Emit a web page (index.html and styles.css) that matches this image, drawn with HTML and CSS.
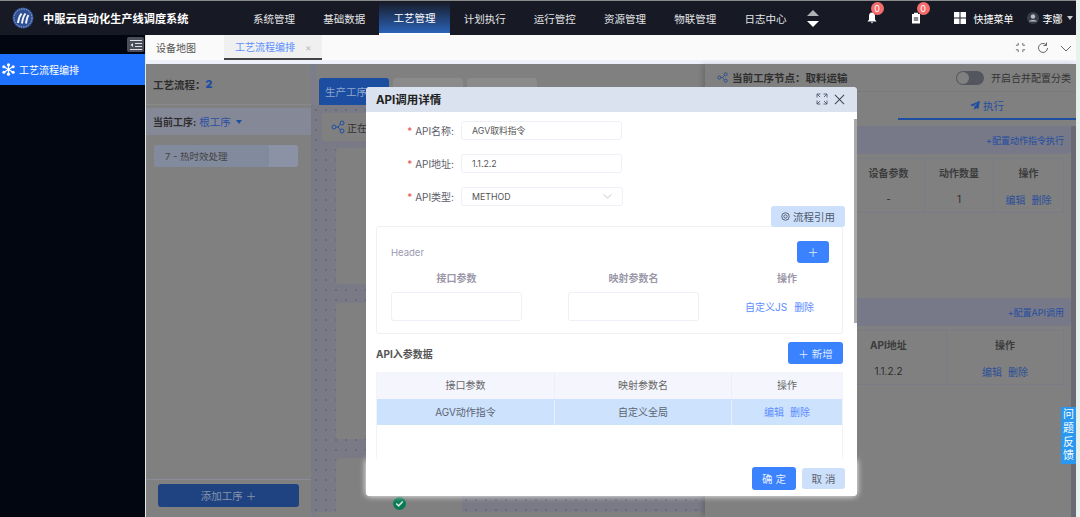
FILE: index.html
```html
<!DOCTYPE html>
<html>
<head>
    <meta charset="UTF-8">
    <title>中服云自动化生产线调度系统</title>
    <link rel="stylesheet" href="styles.css">
</head>
<body>
    <div class="app">
        <header class="topbar">
            <div class="brand">
                <svg class="brand-logo" viewBox="0 0 22 22">
                    <circle cx="11" cy="11" r="10.5" fill="#2f4f94"/>
                    <circle cx="11" cy="11" r="9" fill="none" stroke="#9fb0d4" stroke-width="1" stroke-dasharray="1.5 1"/>
                    <path d="M6 16C6.500 12 7.500 9 9.500 6.500M10 16.500C10.500 12 11.500 9 13.500 6.500M14 16.500C14.500 13 15 10 16.500 8" fill="none" stroke="#f2f5fb" stroke-width="2"/>
                </svg>
                <span class="brand-name">中服云自动化生产线调度系统</span>
            </div>
            <nav class="nav">
                <a class="nav-item">系统管理</a>
                <a class="nav-item">基础数据</a>
                <a class="nav-item active">工艺管理</a>
                <a class="nav-item">计划执行</a>
                <a class="nav-item">运行管控</a>
                <a class="nav-item">资源管理</a>
                <a class="nav-item">物联管理</a>
                <a class="nav-item">日志中心</a>
            </nav>
            <div class="nav-scroll">
                <i class="tri-up"></i>
                <i class="tri-down"></i>
            </div>
            <div class="top-tools">
                <span class="tool tool-bell">
                    <svg viewBox="0 0 12 12" width="12" height="12"><path d="M6 .5C3.800.5 3 2.200 3 4v3.500L1.500 9.500h9L9 7.500V4C9 2.200 8.200.5 6 .5zM4.800 10.200h2.400L6 11.500z" fill="#fff"/></svg>
                    <b class="badge">0</b>
                </span>
                <span class="tool tool-doc">
                    <svg viewBox="0 0 12 12" width="12" height="12"><path d="M2 2h8v9.500H2zM4 .8h4v2H4z" fill="#fff"/><path d="M3.800 6h4.400M3.800 8h4.400" stroke="#171a24"/></svg>
                    <b class="badge">0</b>
                </span>
                <span class="quick">
                    <svg viewBox="0 0 12 12" width="12" height="12"><path d="M0 0h5.500v5.500H0zM6.500 0H12v5.500H6.500zM0 6.500h5.500V12H0zM6.500 6.500H12V12H6.500z" fill="#fff"/></svg>
                    快捷菜单
                </span>
                <span class="user">
                    <svg viewBox="0 0 12 12" width="12" height="12"><circle cx="6" cy="6" r="6" fill="#3a3e4a"/><circle cx="6" cy="4.500" r="2.200" fill="#b9bcc4"/><path d="M2 9.500C2.500 7.500 9.500 7.500 10 9.500z" fill="#b9bcc4"/></svg>
                    李娜
                    <i class="caret"></i>
                </span>
            </div>
        </header>

        <div class="main">
            <aside class="sidebar">
                <div class="side-top"><span class="collapse-btn">
                    <svg viewBox="0 0 12 10" width="12" height="10"><path d="M0 .5h12M5 3.500h7M5 6.500h7M0 9.500h12" stroke="#dfe1e6"/><path d="M3 3v4L.5 5z" fill="#dfe1e6"/></svg>
                </span></div>
                <div class="side-item">
                    <svg viewBox="0 0 14 14" width="13" height="13"><path d="M7 1v12M2 4l10 6M12 4L2 10" stroke="#fff" stroke-width="1.400"/><circle cx="7" cy="2" r="1.700" fill="#fff"/><circle cx="7" cy="12" r="1.700" fill="#fff"/><circle cx="2" cy="4" r="1.700" fill="#fff"/><circle cx="12" cy="4" r="1.700" fill="#fff"/><circle cx="2" cy="10" r="1.700" fill="#fff"/><circle cx="12" cy="10" r="1.700" fill="#fff"/></svg>
                    工艺流程编排
                </div>
            </aside>

            <div class="workspace">
                <div class="tabbar">
                    <span class="page-tab">设备地图</span>
                    <span class="page-tab current">工艺流程编排<i class="tab-close">×</i></span>
                    <div class="tabbar-tools">
                        <svg viewBox="0 0 12 12" width="11" height="11"><path d="M1 3.500l2.500 0 0-2.500M8.500 1l0 2.500 2.500 0M11 8.500l-2.500 0 0 2.500M3.500 11l0-2.500-2.500 0" fill="none" stroke="#666"/></svg>
                        <svg viewBox="0 0 12 12" width="12" height="12"><path d="M10.500 6A4.500 4.500 0 1 1 9 2.600" fill="none" stroke="#666"/><path d="M9.500.5v3h-3" fill="none" stroke="#666"/></svg>
                        <svg viewBox="0 0 12 12" width="12" height="12"><path d="M1 4l5 5 5-5" fill="none" stroke="#666"/></svg>
                    </div>
                </div>

                <div class="content">
                    <section class="flow-panel">
                        <div class="flow-title">工艺流程： <b>2</b></div>
                        <div class="flow-current">当前工序: <span>根工序</span><i class="flow-caret"></i></div>
                        <div class="flow-list">
                            <div class="flow-item"><div class="flow-item-fill">7 - 热时效处理</div></div>
                        </div>
                        <div class="flow-foot"><button class="add-btn">添加工序 ＋</button></div>
                    </section>

                    <section class="canvas">
                        <div class="canvas-tabs">
                            <span class="canvas-tab on">生产工序</span>
                            <span class="canvas-tab"></span>
                            <span class="canvas-tab"></span>
                        </div>
                        <div class="canvas-board">
                            <div class="canvas-tool">
                                <svg viewBox="0 0 14 14" width="14" height="14"><g fill="none" stroke="#1f4ea1"><circle cx="3" cy="7" r="2"/><circle cx="11" cy="3" r="2"/><circle cx="11" cy="11" r="2"/><path d="M5 7h2M7 7l2.500-3M7 7l2.500 3"/></g></svg>
                                正在编辑
                            </div>
                            <div class="node"></div>
                            <div class="node"></div>
                            <div class="node last">
                                <svg class="node-check" viewBox="0 0 12 12" width="13" height="13"><circle cx="6" cy="6" r="6" fill="#0a7a55"/><path d="M3 6l2.200 2.200L9 4.200" fill="none" stroke="#d6e8e0" stroke-width="1.500"/></svg>
                            </div>
                        </div>
                    </section>

                    <section class="detail">
                        <div class="detail-head">
                            <svg viewBox="0 0 12 12" width="11" height="11"><g fill="none" stroke="#2a508f"><circle cx="2.500" cy="6" r="1.700"/><circle cx="9.500" cy="2.500" r="1.700"/><circle cx="9.500" cy="9.500" r="1.700"/><path d="M4 6h2l2-2.500M6 6l2 2.500"/></g></svg>
                            <b>当前工序节点：取料运输</b>
                            <span class="switch"><i></i></span>
                            <span class="switch-text">开启合并配置分类</span>
                        </div>
                        <div class="detail-tabs">
                            <span class="detail-tab">
                                <svg viewBox="0 0 12 12" width="10" height="10"><path d="M12 1L0 6l3.500 1.500L9 3.500 5 8.500V12l2.500-2.500L10 11z" fill="#1f4ea1"/></svg>
                                执行
                            </span>
                        </div>
                        <div class="detail-body">
                            <div class="band"><a>+配置动作指令执行</a></div>
                            <div class="grid-table table-action">
                                <div class="cell head"></div>
                                <div class="cell head">设备参数</div>
                                <div class="cell head">动作数量</div>
                                <div class="cell head">操作</div>
                                <div class="cell"></div>
                                <div class="cell">-</div>
                                <div class="cell">1</div>
                                <div class="cell links"><a>编辑</a><a>删除</a></div>
                            </div>
                            <div class="band band-api"><a>+配置API调用</a></div>
                            <div class="grid-table table-api">
                                <div class="cell head"></div>
                                <div class="cell head">API地址</div>
                                <div class="cell head">操作</div>
                                <div class="cell"></div>
                                <div class="cell">1.1.2.2</div>
                                <div class="cell links"><a>编辑</a><a>删除</a></div>
                            </div>
                        </div>
                    </section>

                    <div class="feedback">问<br>题<br>反<br>馈</div>

                    <div class="dialog">
                        <div class="dialog-head">
                            <span class="dialog-title">API调用详情</span>
                            <svg viewBox="0 0 12 12" width="12" height="12"><path d="M1 4.500V1h3.500M1 1l3 3M11 4.500V1H7.500M11 1L8 4M1 7.500V11h3.500M1 11l3-3M11 7.500V11H7.500M11 11L8 8" fill="none" stroke="#4b5a70" stroke-width=".9"/></svg>
                            <svg viewBox="0 0 12 12" width="11" height="11"><path d="M1 1l10 10M11 1L1 11" stroke="#3c4656" stroke-width="1.100"/></svg>
                        </div>
                        <div class="dialog-body">
                            <div class="form-row">
                                <label class="form-label"><em>*</em> API名称:</label>
                                <div class="form-input">AGV取料指令</div>
                            </div>
                            <div class="form-row">
                                <label class="form-label"><em>*</em> API地址:</label>
                                <div class="form-input">1.1.2.2</div>
                            </div>
                            <div class="form-row">
                                <label class="form-label"><em>*</em> API类型:</label>
                                <div class="form-input select">METHOD
                                    <svg viewBox="0 0 10 6" width="9" height="5"><path d="M.5.5L5 5 9.500.5" fill="none" stroke="#b5b9c2"/></svg>
                                </div>
                            </div>
                            <div class="ref-row">
                                <button class="ref-btn">
                                    <svg viewBox="0 0 12 12" width="9" height="9"><circle cx="6" cy="6" r="5" fill="none" stroke="#556" stroke-width="1.200"/><circle cx="6" cy="6" r="2.200" fill="none" stroke="#556" stroke-width="1.200"/></svg>
                                    流程引用
                                </button>
                            </div>
                            <div class="header-box">
                                <div class="header-top">
                                    <span class="header-label">Header</span>
                                    <button class="plus-btn">＋</button>
                                </div>
                                <div class="header-cols">
                                    <span>接口参数</span>
                                    <span>映射参数名</span>
                                    <span>操作</span>
                                </div>
                                <div class="header-cols header-vals">
                                    <div class="blank-input"></div>
                                    <div class="blank-input"></div>
                                    <div class="header-links"><a>自定义JS</a><a>删除</a></div>
                                </div>
                            </div>
                            <div class="params-top">
                                <b>API入参数据</b>
                                <button class="add-param">＋ 新增</button>
                            </div>
                            <div class="params">
                                <div class="params-row params-head">
                                    <div>接口参数</div>
                                    <div>映射参数名</div>
                                    <div>操作</div>
                                </div>
                                <div class="params-row params-sel">
                                    <div>AGV动作指令</div>
                                    <div>自定义全局</div>
                                    <div class="param-links"><a>编辑</a><a>删除</a></div>
                                </div>
                            </div>
                            <i class="dialog-scroll"></i>
                        </div>
                        <div class="dialog-foot">
                            <button class="btn-ok">确 定</button>
                            <button class="btn-cancel">取 消</button>
                        </div>
                    </div>
                </div>
            </div>
        </div>
    </div>
</body>
</html>
```

FILE: styles.css
```css
* {
    box-sizing: border-box;
}
body {
    margin: 0;
    font-family: Inter, 'Noto Sans CJK SC', sans-serif;
    font-size: 10px;
    color: #333;
    white-space: nowrap;
    overflow: hidden;
}
i {
    font-style: normal;
}
button {
    font-family: inherit;
    border: none;
    padding: 0;
}
.app {
    height: 100vh;
    display: flex;
    flex-direction: column;
    padding-right: 4px;
    background-color: #e8f3ee;
}

/* top bar */
.topbar {
    height: 35px;
    flex: none;
    display: flex;
    align-items: stretch;
    background-color: #171a24;
    border-top: 1px solid #8a8a8a;
    color: #fff;
}
.brand {
    width: 239px;
    display: flex;
    align-items: center;
    padding-left: 12px;
    gap: 9px;
}
.brand-logo {
    width: 22px;
    height: 22px;
}
.brand-name {
    font-size: 11.2px;
    font-weight: bold;
}
.nav {
    display: flex;
}
.nav-item {
    width: 70.2px;
    display: flex;
    align-items: center;
    justify-content: center;
    color: #e4e5e8;
    font-size: 10.5px;
}
.nav-item.active {
    color: #fff;
    background: linear-gradient(#171a24, #2b62b8);
    border-bottom: 2px solid #fff;
}
.nav-scroll {
    display: flex;
    flex-direction: column;
    justify-content: center;
    gap: 5px;
    margin-left: 6px;
}
.tri-up,
.tri-down {
    width: 0;
    height: 0;
    border-left: 6px solid transparent;
    border-right: 6px solid transparent;
}
.tri-up {
    border-bottom: 6px solid #b0b2b8;
}
.tri-down {
    border-top: 6px solid #fff;
}
.top-tools {
    flex: 1;
    display: flex;
    align-items: center;
    padding-left: 47px;
}
.tool {
    position: relative;
    display: flex;
}
.tool-doc {
    margin-left: 32px;
}
.badge {
    position: absolute;
    top: -10px;
    left: 5px;
    width: 13px;
    height: 13px;
    border-radius: 50%;
    background-color: #f56c6c;
    font-size: 9px;
    font-weight: normal;
    line-height: 13px;
    text-align: center;
}
.tool-doc .badge {
    left: 7px;
}
.quick {
    display: flex;
    align-items: center;
    gap: 8px;
    margin-left: 32px;
}
.user {
    display: flex;
    align-items: center;
    gap: 4px;
    margin-left: 13px;
}
.caret {
    width: 0;
    height: 0;
    border-left: 3.5px solid transparent;
    border-right: 3.5px solid transparent;
    border-top: 4px solid #ccc;
}

/* side */
.main {
    flex: 1;
    min-height: 0;
    display: flex;
}
.sidebar {
    width: 146px;
    flex: none;
    background-color: #020611;
    border-right: 1px solid #e6e6e6;
}
.side-top {
    height: 19px;
    display: flex;
    align-items: center;
    justify-content: flex-end;
    padding-right: 1px;
}
.collapse-btn {
    width: 17px;
    height: 15px;
    display: flex;
    align-items: center;
    justify-content: center;
    background-color: #4a4d5a;
    border-radius: 2px;
}
.side-item {
    height: 31px;
    display: flex;
    align-items: center;
    gap: 4px;
    padding-left: 2px;
    background-color: #1f72ff;
    color: #fff;
}

/* tabs */
.workspace {
    flex: 1;
    min-width: 0;
    display: flex;
    flex-direction: column;
}
.tabbar {
    height: 29px;
    flex: none;
    display: flex;
    background-color: #fafafa;
    border-bottom: 4px solid #eef0fa;
    color: #555;
}
.page-tab {
    height: 100%;
    display: flex;
    align-items: center;
    padding: 0 10px;
    margin-right: 18px;
}
.page-tab.current {
    width: 98px;
    margin: 0;
    padding: 0 11px;
    background-color: #f0f0f0;
    border-bottom: 2px solid #444;
    color: #5e8fff;
}
.tab-close {
    margin-left: 10px;
    color: #bbb;
}
.tabbar-tools {
    margin-left: auto;
    display: flex;
    align-items: center;
    gap: 11px;
    padding-right: 4px;
}

/* content, dimmed behind the dialog */
.content {
    flex: 1;
    min-height: 0;
    position: relative;
    display: flex;
    background-color: #808080;
}
.flow-panel {
    width: 165px;
    flex: none;
    display: flex;
    flex-direction: column;
    color: #2e2e2e;
}
.flow-title {
    height: 41px;
    display: flex;
    align-items: center;
    padding-left: 7px;
    font-size: 10.5px;
    font-weight: bold;
    border-bottom: 1px solid #8a8a8a;
}
.flow-title b {
    color: #1f4ea1;
}
.flow-current {
    height: 27px;
    margin-top: 3px;
    display: flex;
    align-items: center;
    padding-left: 7px;
    background-color: #858997;
    font-weight: bold;
}
.flow-current span {
    margin-left: 3px;
    color: #2a50a5;
    font-size: 10.5px;
    font-weight: normal;
}
.flow-caret {
    margin-left: 5px;
    border-left: 3.5px solid transparent;
    border-right: 3.5px solid transparent;
    border-top: 4px solid #1f4ea1;
}
.flow-list {
    flex: 1;
    padding: 10px 13px 0 8px;
}
.flow-item {
    height: 22px;
    background-color: #8b92a5;
    border-radius: 3px;
}
.flow-item-fill {
    width: 115px;
    height: 100%;
    display: flex;
    align-items: center;
    padding-left: 11px;
    background-color: #828a9d;
    border-radius: 3px;
    color: #444;
    font-size: 9.5px;
}
.flow-foot {
    height: 38px;
    padding: 4px 12px 0 12px;
    border-top: 1px solid #8b8c9b;
}
.add-btn {
    width: 141px;
    height: 23px;
    display: block;
    background-color: #1f4280;
    border-radius: 3px;
    color: #8794ab;
    font-size: 10.5px;
}
.canvas {
    width: 394px;
    flex: none;
    display: flex;
    flex-direction: column;
    border-left: 5px solid #7b7d8b;
}
.canvas-tabs {
    height: 41px;
    flex: none;
    display: flex;
    align-items: flex-end;
    gap: 4px;
    padding-left: 3px;
}
.canvas-tab {
    width: 70px;
    height: 27px;
    display: flex;
    align-items: center;
    padding-left: 6px;
    background-color: #8b8b8b;
    border-radius: 3px 3px 0 0;
}
.canvas-tab.on {
    background-color: #1b4da0;
    color: #8fa6cf;
    font-size: 10.5px;
}
.canvas-board {
    height: 407px;
    margin-left: -5px;
    padding: 8px 0 0 11px;
    background-color: #797a85;
    background-image: radial-gradient(#62636f 0.6px, transparent 0.9px);
    background-size: 10px 10px;
}
.canvas-tool {
    width: 200px;
    height: 28px;
    display: flex;
    align-items: center;
    gap: 2px;
    padding-left: 9px;
    background-color: #808080;
    border-radius: 2px;
    color: #333;
}
.node {
    width: 300px;
    height: 136px;
    margin: 7px 0 19px 14px;
    background-color: #808080;
    border-radius: 3px;
}
.node + .node {
    margin-top: 0;
}
.node.last {
    width: 126px;
    height: 55px;
    margin-bottom: 0;
    display: flex;
    align-items: flex-end;
    justify-content: center;
    padding: 0 0 3px 0;
}
.node-check {
    display: block;
}

/* right panel */
.detail {
    flex: 1;
    min-width: 0;
    display: flex;
    flex-direction: column;
    box-shadow: -3px 0 5px rgba(0, 0, 0, 0.15);
    color: #2e2e2e;
}
.detail-head {
    height: 28px;
    flex: none;
    display: flex;
    align-items: center;
    padding: 0 5px 0 12px;
    border-bottom: 1px solid #7a7a7a;
}
.detail-head b {
    margin-left: 4px;
    font-size: 10.5px;
}
.switch {
    width: 28px;
    height: 14px;
    margin-left: auto;
    padding: 1px;
    background-color: #53565f;
    border-radius: 7px;
}
.switch i {
    display: block;
    width: 12px;
    height: 12px;
    background-color: #808080;
    border-radius: 50%;
}
.switch-text {
    margin-left: 7px;
    color: #333;
}
.detail-tabs {
    height: 28px;
    flex: none;
    display: flex;
    justify-content: flex-end;
}
.detail-tab {
    width: 178px;
    display: flex;
    align-items: center;
    justify-content: center;
    gap: 3px;
    border-bottom: 2px solid #1f4ea1;
    color: #1f4ea1;
    font-size: 10.5px;
}
.detail-body {
    flex: 1;
    min-height: 0;
    margin-top: 6px;
    border-right: 5px solid #6a6a74;
}
.band {
    height: 28px;
    display: flex;
    align-items: flex-end;
    justify-content: flex-end;
    padding: 0 7px 7px 0;
    background-color: #787988;
    border-radius: 0 3px 3px 0;
    color: #1f4ea1;
    font-size: 9px;
}
.band-api {
    margin-top: 85px;
}
.grid-table {
    display: grid;
    margin: 4px 7px 0 0;
    border: 1px solid #797b86;
    border-left: none;
}
.table-action {
    grid-template-columns: 1fr 72px 69px 70px;
}
.table-api {
    grid-template-columns: 1fr 116px 117px;
}
.cell {
    height: 26px;
    display: flex;
    align-items: center;
    justify-content: center;
    border-left: 1px solid #797b86;
}
.cell.head {
    height: 27px;
    font-weight: bold;
    color: #3c3c3c;
}
.links {
    gap: 6px;
    color: #2b4f98;
}
.feedback {
    position: absolute;
    right: 0;
    top: 343px;
    width: 15px;
    padding: 1px 0;
    background-color: #2a97f0;
    color: #fff;
    font-size: 11px;
    line-height: 13.8px;
    text-align: center;
}

/* dialog */
.dialog {
    position: absolute;
    left: 220px;
    top: 23px;
    width: 491px;
    height: 409px;
    display: flex;
    flex-direction: column;
    background-color: #fff;
    border-radius: 4px;
}
.dialog-head {
    height: 25px;
    flex: none;
    display: flex;
    align-items: center;
    gap: 6px;
    padding: 0 12px 1px 10px;
    background-color: #dbe2ef;
    border-radius: 4px 4px 0 0;
}
.dialog-title {
    margin-right: auto;
    color: #222;
    font-size: 11.5px;
    font-weight: bold;
}
.dialog-body {
    flex: 1;
    min-height: 0;
    position: relative;
    padding: 9px 14px 0 10px;
    overflow: hidden;
}
.dialog-scroll {
    position: absolute;
    right: 0;
    top: 7px;
    width: 3px;
    height: 204px;
    background-color: #a9a9a9;
}
.form-row {
    display: flex;
    align-items: center;
    height: 19px;
    margin-bottom: 14px;
}
.form-label {
    width: 78px;
    text-align: right;
    color: #5c5c68;
}
.form-label em {
    color: #e5534b;
    font-style: normal;
}
.form-input {
    width: 161px;
    height: 19px;
    display: flex;
    align-items: center;
    justify-content: space-between;
    margin-left: 7px;
    padding: 0 10px;
    border: 1px solid #eef0f7;
    border-radius: 3px;
    color: #555;
    font-size: 8.8px;
}
.form-input.select {
    width: 162px;
}
.ref-row {
    display: flex;
    justify-content: flex-end;
    height: 20px;
    margin: -14px -2px 0 0;
}
.ref-btn {
    width: 74px;
    height: 21px;
    display: flex;
    align-items: center;
    justify-content: center;
    gap: 3px;
    background-color: #cce0fb;
    border-radius: 3px;
    color: #4f5a6b;
    font-size: 10.5px;
}
.header-box {
    height: 108px;
    padding: 14px 13px 0 14px;
    border: 1px solid #eef0f6;
    border-radius: 3px;
}
.header-top {
    height: 22px;
    display: flex;
    align-items: center;
    justify-content: space-between;
}
.header-label {
    color: #9a9ab0;
    font-size: 9.5px;
}
.plus-btn {
    width: 32px;
    height: 22px;
    background-color: #3b82ff;
    border-radius: 3px;
    color: #dfe9ff;
    font-size: 11px;
}
.header-cols {
    display: grid;
    grid-template-columns: 131px 131px 84px;
    column-gap: 46px;
    height: 20px;
    margin-top: 4px;
    align-items: center;
    justify-items: center;
    color: #9a98a8;
    font-weight: bold;
}
.header-vals {
    height: 29px;
    margin-top: 5px;
}
.blank-input {
    width: 131px;
    height: 29px;
    border: 1px solid #eef0f7;
    border-radius: 3px;
}
.header-links {
    justify-self: start;
    display: flex;
    gap: 7px;
    color: #5b8cff;
    font-weight: normal;
}
.params-top {
    height: 22px;
    margin-top: 8px;
    display: flex;
    align-items: center;
    justify-content: space-between;
    color: #555;
}
.add-param {
    width: 55px;
    height: 22px;
    background-color: #3b82ff;
    border-radius: 3px;
    color: #dfe9ff;
    font-size: 10.5px;
}
.params {
    height: 90px;
    margin-top: 8px;
    border-left: 1px solid #f2f3fa;
    border-right: 1px solid #f2f3fa;
}
.params-row {
    display: grid;
    grid-template-columns: 177px 177px 1fr;
    text-align: center;
    align-items: center;
}
.params-row > div {
    line-height: 25px;
}
.params-row > div + div {
    border-left: 1px solid #eceef8;
}
.params-head {
    height: 27px;
    background-color: #f5f6fd;
    color: #666;
}
.params-sel {
    height: 26px;
    background-color: #cce2fd;
    color: #5c6370;
}
.param-links a {
    margin: 0 3px;
    color: #5b8cff;
}
.dialog-foot {
    height: 36px;
    flex: none;
    display: flex;
    justify-content: flex-end;
    align-items: flex-start;
    gap: 6px;
    padding: 7px 12px 0 0;
    background-color: #fff;
    border-radius: 0 0 4px 4px;
    box-shadow: 0 0 6px #fff;
    position: relative;
}
.btn-ok,
.btn-cancel {
    height: 23px;
    border-radius: 3px;
    font-size: 10.5px;
}
.btn-ok {
    width: 44px;
    background-color: #3b82ff;
    color: #e8f0ff;
}
.btn-cancel {
    width: 43px;
    margin-top: 1px;
    height: 21px;
    background-color: #cce0fb;
    color: #5c6370;
}
```
